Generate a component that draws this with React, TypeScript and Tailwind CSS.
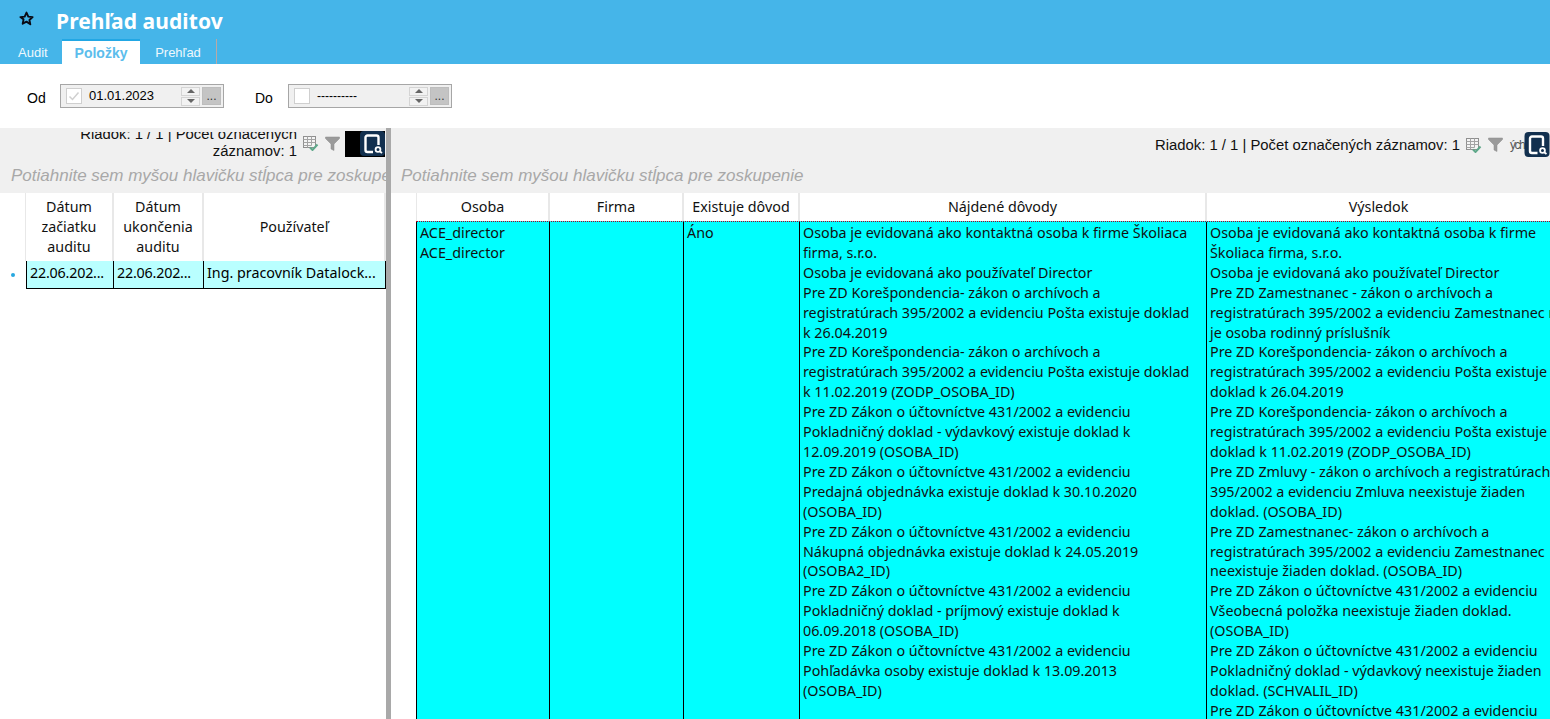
const sans = "font-['Liberation_Sans',Arial,sans-serif]";
const segoe = "font-['Noto_Sans',sans-serif]";

const found = [
  'Osoba je evidovaná ako kontaktná osoba k firme Školiaca',
  'firma, s.r.o.',
  'Osoba je evidovaná ako používateľ Director',
  'Pre ZD Korešpondencia- zákon o archívoch a',
  'registratúrach 395/2002 a evidenciu Pošta existuje doklad',
  'k 26.04.2019',
  'Pre ZD Korešpondencia- zákon o archívoch a',
  'registratúrach 395/2002 a evidenciu Pošta existuje doklad',
  'k 11.02.2019 (ZODP_OSOBA_ID)',
  'Pre ZD Zákon o účtovníctve 431/2002 a evidenciu',
  'Pokladničný doklad - výdavkový existuje doklad k',
  '12.09.2019 (OSOBA_ID)',
  'Pre ZD Zákon o účtovníctve 431/2002 a evidenciu',
  'Predajná objednávka existuje doklad k 30.10.2020',
  '(OSOBA_ID)',
  'Pre ZD Zákon o účtovníctve 431/2002 a evidenciu',
  'Nákupná objednávka existuje doklad k 24.05.2019',
  '(OSOBA2_ID)',
  'Pre ZD Zákon o účtovníctve 431/2002 a evidenciu',
  'Pokladničný doklad - príjmový existuje doklad k',
  '06.09.2018 (OSOBA_ID)',
  'Pre ZD Zákon o účtovníctve 431/2002 a evidenciu',
  'Pohľadávka osoby existuje doklad k 13.09.2013',
  '(OSOBA_ID)',
];
const result = [
  'Osoba je evidovaná ako kontaktná osoba k firme',
  'Školiaca firma, s.r.o.',
  'Osoba je evidovaná ako používateľ Director',
  'Pre ZD Zamestnanec - zákon o archívoch a',
  'registratúrach 395/2002 a evidenciu Zamestnanec ne',
  'je osoba rodinný príslušník',
  'Pre ZD Korešpondencia- zákon o archívoch a',
  'registratúrach 395/2002 a evidenciu Pošta existuje',
  'doklad k 26.04.2019',
  'Pre ZD Korešpondencia- zákon o archívoch a',
  'registratúrach 395/2002 a evidenciu Pošta existuje',
  'doklad k 11.02.2019 (ZODP_OSOBA_ID)',
  'Pre ZD Zmluvy - zákon o archívoch a registratúrach',
  '395/2002 a evidenciu Zmluva neexistuje žiaden',
  'doklad. (OSOBA_ID)',
  'Pre ZD Zamestnanec- zákon o archívoch a',
  'registratúrach 395/2002 a evidenciu Zamestnanec',
  'neexistuje žiaden doklad. (OSOBA_ID)',
  'Pre ZD Zákon o účtovníctve 431/2002 a evidenciu',
  'Všeobecná položka neexistuje žiaden doklad.',
  '(OSOBA_ID)',
  'Pre ZD Zákon o účtovníctve 431/2002 a evidenciu',
  'Pokladničný doklad - výdavkový neexistuje žiaden',
  'doklad. (SCHVALIL_ID)',
  'Pre ZD Zákon o účtovníctve 431/2002 a evidenciu',
];

function Lines({ lines }: { lines: string[] }) {
  return (
    <>
      {lines.map((l, i) => (
        <div key={i} className="whitespace-nowrap h-[19.92px] leading-[20px]">{l}</div>
      ))}
    </>
  );
}

function Stepper() {
  return (
    <div className="flex flex-col gap-px w-[19px] ml-auto">
      <div className="h-[9px] bg-[#f2f2f2] border border-[#d4d4d4] flex items-center justify-center">
        <div className="w-0 h-0 border-x-[4px] border-x-transparent border-b-[4px] border-b-[#666]" />
      </div>
      <div className="h-[9px] bg-[#f2f2f2] border border-[#d4d4d4] flex items-center justify-center">
        <div className="w-0 h-0 border-x-[4px] border-x-transparent border-t-[4px] border-t-[#666]" />
      </div>
    </div>
  );
}

function DateBox({ value, checked, dash }: { value: string; checked?: boolean; dash?: boolean }) {
  return (
    <div className="w-[164px] h-[24px] border border-[#a6a6a6] bg-[#f0f0f0] flex items-center pl-[5px] pr-[2px]">
      <div className="w-[16px] h-[16px] border border-[#cfcfcf] bg-white flex items-center justify-center shrink-0">
        {checked && (
          <svg width="12" height="12" viewBox="0 0 12 12" fill="none" stroke="#d0d0d0" strokeWidth="1.5">
            <path d="M1.5 6.500 4.500 9.500 10.500 2.500" />
          </svg>
        )}
      </div>
      <span className={`ml-[7px] text-black ${dash ? 'text-[12px]' : 'text-[13px]'}`}>{value}</span>
      <Stepper />
      <div className="w-[19px] h-[18px] ml-[2px] bg-[#c4c4c4] border border-[#bdbdbd] text-[12px] leading-[16px] text-center text-[#333]">...</div>
    </div>
  );
}

function GridIcon() {
  return (
    <svg width="16" height="16" viewBox="0 0 16 16" className="shrink-0">
      <rect x="0.500" y="1.500" width="12" height="11" fill="#f4f4f4" stroke="#8f8f8f" />
      <path d="M0.500 4.500h12M0.500 7.500h12M0.500 10.500h8M4.500 1.500v11M8.500 1.500v9" stroke="#a4a4a4" />
      <path d="M7 12.500l2.500 2.500 5-5.500" fill="none" stroke="#5fa88a" strokeWidth="2" />
    </svg>
  );
}
function FilterIcon() {
  return (
    <svg width="15" height="15" viewBox="0 0 15 15" className="shrink-0">
      <path d="M0.500 1h14v1.500L9 8v6.500L6 13V8L0.500 2.500z" fill="#9a9a9a" stroke="#8a8a8a" strokeWidth="0.500" />
    </svg>
  );
}
function SearchBadge({ w = 25 }: { w?: number }) {
  return (
    <svg width={w} height="25" viewBox="0 0 25 25" className="shrink-0">
      <rect width="25" height="25" rx="4" fill="#12304f" />
      <path d="M13 21H7.500A2 2 0 0 1 5.500 19V6.500A2 2 0 0 1 7.500 4.500h9A2 2 0 0 1 18.500 6.500V14" fill="none" stroke="#fff" strokeWidth="2.400" />
      <circle cx="18" cy="18.500" r="2.400" fill="none" stroke="#fff" strokeWidth="1.800" />
      <path d="M20 20.500l2 1.500" stroke="#fff" strokeWidth="1.800" />
    </svg>
  );
}

function Head({ w, children, grow }: { w?: string; children: React.ReactNode; grow?: boolean }) {
  return (
    <div className={`${w ?? ''} ${grow ? 'flex-1' : 'shrink-0'} flex items-center justify-center text-center border-r-2 border-[#e8e8e8] leading-[20px] text-[#111]`}>
      {children}
    </div>
  );
}

const groupHint = 'Potiahnite sem myšou hlavičku stĺpca pre zoskupenie';

export default function App() {
  return (
    <div className={`w-[1550px] h-[719px] overflow-hidden bg-white flex flex-col ${sans}`}>
      {/* header */}
      <header className="h-[64px] bg-[#45b5e9] shrink-0 flex flex-col">
        <div className="h-[39px] flex items-center pl-[19px]">
          <svg width="15" height="15" viewBox="0 0 24 24" className="-mt-[3px]">
            <path d="M12 2.500l2.900 6.400 6.900.8-5.100 4.700 1.400 6.900L12 17l-6.100 3.300 1.400-6.900L2.200 9.700l6.900-.8z" fill="#45b5e9" stroke="#0a0a14" strokeWidth="3" strokeLinejoin="round" />
          </svg>
          <h1 className={`ml-[22px] mt-[4px] text-[21px] font-bold text-white tracking-[0.1px] ${segoe}`}>Prehľad auditov</h1>
        </div>
        <nav className="h-[25px] flex items-stretch text-[13px]">
          <div className="w-[62px] pl-[18px] pt-[4px] text-[#eef8fd]">Audit</div>
          <div className="w-[78px] bg-white border-t-[2px] border-[#22a7e4] text-center pt-[2px] font-bold text-[#5cbdec] text-[14px]">Položky</div>
          <div className="w-[77px] text-center pt-[4px] text-[#eef8fd] border-r border-[#b9a9a5]">Prehľad</div>
        </nav>
      </header>

      {/* filter */}
      <div className="h-[64px] shrink-0 flex items-center text-[14px] text-black">
        <span className="ml-[27px] w-[33px] mt-[4px]">Od</span>
        <DateBox value="01.01.2023" checked />
        <span className="ml-[31px] w-[33px] mt-[4px]">Do</span>
        <DateBox value="----------" dash />
      </div>

      {/* split */}
      <div className="flex-1 flex min-h-0">
        {/* left pane */}
        <section className="w-[386px] shrink-0 flex flex-col overflow-hidden">
          <div className="h-[30px] bg-[#f0f0f0] flex items-center justify-end text-[14.85px] text-[#111] shrink-0 overflow-hidden">
            <div className="self-start mt-[4px] h-[28px] overflow-hidden flex items-end mr-[6px] shrink-0">
              <div className="text-right leading-[17px] w-[240px] shrink-0">
                Riadok: 1 / 1 | Počet označených záznamov: 1
              </div>
            </div>
            <div className="flex items-center gap-[6px] mr-[5px]">
              <GridIcon />
              <FilterIcon />
            </div>
            <div className="w-[40px] h-[26px] mt-[1px] mr-[1px] bg-black flex justify-end items-center shrink-0">
              <SearchBadge />
            </div>
          </div>
          <div className="h-[35px] bg-[#f0f0f0] shrink-0 flex items-center pl-[11px] italic text-[#a8a8a8] text-[17px] whitespace-nowrap overflow-hidden">{groupHint}</div>
          <div className={`flex-1 text-[14.3px] ${segoe}`}>
            <div className="flex h-[68px] pl-[25px]">
              <div className="w-[1px] bg-[#e8e8e8]" />
              <Head w="w-[88px]"><span>Dátum<br />začiatku<br />auditu</span></Head>
              <Head w="w-[90px]"><span>Dátum<br />ukončenia<br />auditu</span></Head>
              <Head grow>Používateľ</Head>
            </div>
            <div className="flex items-center h-[28px]">
              <div className="w-[26px] flex justify-center">
                <div className="w-[4px] h-[4px] rounded-full bg-[#27a8e0]" />
              </div>
              <div className="flex-1 flex h-full bg-[#b9ffff] border-l border-b border-black overflow-hidden text-black leading-[24px]">
                <div className="w-[87px] border-r border-black pl-[3px] shrink-0 tracking-[-0.2px]">22.06.202...</div>
                <div className="w-[90px] border-r border-black pl-[3px] shrink-0 tracking-[-0.2px]">22.06.202...</div>
                <div className="flex-1 pl-[3px] whitespace-nowrap border-r border-black">Ing. pracovník Datalock...</div>
              </div>
            </div>
          </div>
        </section>

        {/* splitter */}
        <div className="w-[5px] bg-[#a9a9a9] shrink-0" />

        {/* right pane */}
        <section className="flex-1 min-w-0 flex flex-col overflow-hidden">
          <div className="h-[30px] bg-[#f0f0f0] flex items-center justify-end text-[14.85px] text-[#111] shrink-0 whitespace-nowrap">
            <span className="mr-[6px] mt-[5px]">Riadok: 1 / 1 | Počet označených záznamov: 1</span>
            <div className="flex items-center gap-[6px] mt-[3px]">
              <GridIcon />
              <FilterIcon />
            </div>
            <span className="ml-[7px] w-[14px] text-[12px] text-[#555] mt-[3px] tracking-[-1.5px]">ých z</span>
            <div className="mt-[3px]"><SearchBadge w={26} /></div>
          </div>
          <div className="h-[35px] bg-[#f0f0f0] shrink-0 flex items-center pl-[10px] italic text-[#a8a8a8] text-[17px] whitespace-nowrap">{groupHint}</div>
          <div className={`flex-1 min-h-0 flex flex-col pl-[25px] text-[14.3px] text-[#111] ${segoe}`}>
            <div className="flex h-[28px] shrink-0 border-l border-[#e8e8e8]">
              <Head w="w-[133px]">Osoba</Head>
              <Head w="w-[134px]">Firma</Head>
              <Head w="w-[116px]">Existuje dôvod</Head>
              <Head w="w-[407px]">Nájdené dôvody</Head>
              <Head w="w-[345px]">Výsledok</Head>
            </div>
            <div className="flex flex-1 min-h-0 bg-[#00ffff] border-t border-dotted border-[#b00020] text-[#111]">
              <div className="w-[134px] shrink-0 border-l border-r border-black pl-[3px] pt-[1px]">
                <Lines lines={['ACE_director', 'ACE_director']} />
              </div>
              <div className="w-[134px] shrink-0 border-r border-black" />
              <div className="w-[116px] shrink-0 border-r border-black pl-[3px] pt-[1px]">
                <Lines lines={['Áno']} />
              </div>
              <div className="w-[407px] shrink-0 border-r border-black pl-[3px] pt-[1px]">
                <Lines lines={found} />
              </div>
              <div className="flex-1 overflow-hidden pl-[3px] pt-[1px]">
                <Lines lines={result} />
              </div>
            </div>
          </div>
        </section>
      </div>
    </div>
  );
}
